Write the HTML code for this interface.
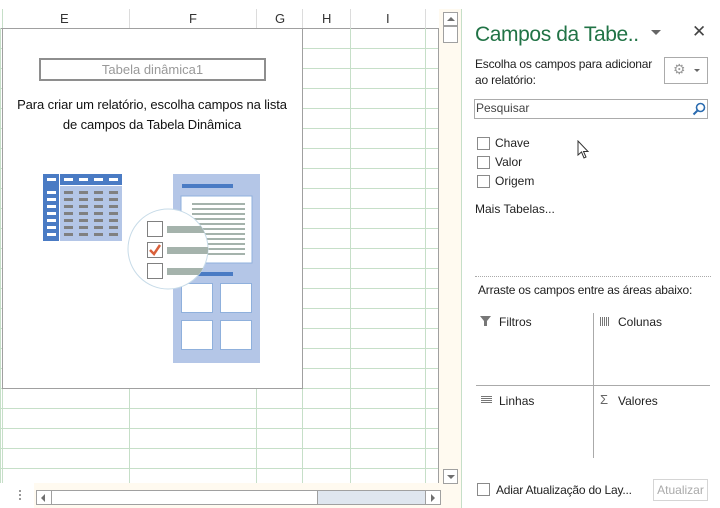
<!DOCTYPE html>
<html><head><meta charset="utf-8"><style>
*{margin:0;padding:0;box-sizing:border-box}
body{width:720px;height:508px;position:relative;overflow:hidden;background:#fff;font-family:"Liberation Sans",sans-serif;color:#222}
.a{position:absolute}
.hl{position:absolute;height:1px;background:#c6dfc8}
.vl{position:absolute;width:1px;background:#c6dfc8}
.t{position:absolute;font-size:12px;white-space:nowrap}
.cb{position:absolute;width:13px;height:13px;border:1px solid #8a8a8a;background:#fff}
</style></head><body>
<div class="a" style="left:0;top:28px;width:440px;height:1px;background:#a0a0a0"></div>
<div class="vl" style="left:2px;top:9px;height:19px"></div>
<div class="vl" style="left:129px;top:9px;height:19px;background:#dcdcdc"></div>
<div class="vl" style="left:256px;top:9px;height:19px;background:#dcdcdc"></div>
<div class="vl" style="left:302px;top:9px;height:19px;background:#dcdcdc"></div>
<div class="vl" style="left:350px;top:9px;height:19px;background:#dcdcdc"></div>
<div class="vl" style="left:425px;top:9px;height:19px;background:#dcdcdc"></div>
<div class="t" style="left:60px;top:11px;font-size:13px;color:#333">E</div>
<div class="t" style="left:189px;top:11px;font-size:13px;color:#333">F</div>
<div class="t" style="left:275px;top:11px;font-size:13px;color:#333">G</div>
<div class="t" style="left:322px;top:11px;font-size:13px;color:#333">H</div>
<div class="t" style="left:386px;top:11px;font-size:13px;color:#333">I</div>
<div id="g"></div>
<script>
var h='';
for(var y=48;y<=468;y+=20){h+='<div class="hl" style="left:0;top:'+y+'px;width:439px"></div>';}
[302,350,425].forEach(function(x){h+='<div class="vl" style="left:'+x+'px;top:28px;height:455px"></div>'});
[2,129,256].forEach(function(x){h+='<div class="vl" style="left:'+x+'px;top:388px;height:95px"></div>'});
h+='<div class="vl" style="left:0;top:28px;height:455px"></div>';
document.getElementById('g').innerHTML=h;
</script>
<div class="a" style="left:438px;top:28px;width:1px;height:455px;background:#a0a0a0"></div>
<div class="a" style="left:2px;top:28px;width:301px;height:361px;background:#fff;border:1px solid #a0a0a0"></div>
<div class="a" style="left:39px;top:58px;width:227px;height:23px;border:2px solid #8e8e8e;color:#999;font-size:13px;text-align:center;line-height:19px">Tabela dinâmica1</div>
<div class="t" style="left:0;top:95px;width:304px;text-align:center;font-size:13px;color:#111;line-height:20px;white-space:normal;letter-spacing:-0.1px">Para criar um relatório, escolha campos na lista<br>de campos da Tabela Dinâmica</div>
<svg class="a" style="left:0;top:0" width="300" height="380">
<defs><clipPath id="cc"><circle cx="168" cy="249" r="40"/></clipPath></defs>
<rect x="43" y="174" width="16" height="67" fill="#4a7bc4"/>
<rect x="60" y="174" width="62" height="11" fill="#4a7bc4"/>
<rect x="60" y="186" width="62" height="55" fill="#b4c6e7"/>
<g fill="#fff"><rect x="47" y="178" width="9" height="3"/><rect x="64" y="178" width="9" height="3"/><rect x="79" y="178" width="9" height="3"/><rect x="94" y="178" width="9" height="3"/><rect x="109" y="178" width="9" height="3"/>
<rect x="47" y="191" width="9" height="3"/><rect x="47" y="198" width="9" height="3"/><rect x="47" y="205" width="9" height="3"/><rect x="47" y="212" width="9" height="3"/><rect x="47" y="219" width="9" height="3"/><rect x="47" y="226" width="9" height="3"/><rect x="47" y="233" width="9" height="3"/></g>
<g fill="#808080" id="gr"></g>
<rect x="173" y="174" width="87" height="189" fill="#b4c6e7"/>
<rect x="182" y="184" width="51" height="4" fill="#4a7bc4"/>
<rect x="181" y="196" width="71" height="67" fill="#fff" stroke="#8fb0dc"/>
<g stroke="#a5b3ac" stroke-width="2"><line x1="192" y1="204" x2="245" y2="204"/><line x1="192" y1="209" x2="245" y2="209"/><line x1="192" y1="214" x2="245" y2="214"/><line x1="192" y1="219" x2="245" y2="219"/><line x1="192" y1="224" x2="245" y2="224"/><line x1="192" y1="229" x2="245" y2="229"/><line x1="192" y1="234" x2="245" y2="234"/><line x1="192" y1="239" x2="245" y2="239"/><line x1="192" y1="244" x2="245" y2="244"/><line x1="192" y1="249" x2="245" y2="249"/><line x1="192" y1="254" x2="245" y2="254"/></g>
<rect x="190" y="272" width="43" height="4" fill="#4a7bc4"/>
<g fill="#fff" stroke="#8fb0dc"><rect x="181.5" y="283.5" width="31" height="29"/><rect x="220.5" y="283.5" width="31" height="29"/><rect x="181.5" y="320.5" width="31" height="29"/><rect x="220.5" y="320.5" width="31" height="29"/></g>
<circle cx="168" cy="249" r="40" fill="#fff" stroke="#c7dbe8"/>
<g fill="#fff" stroke="#808080"><rect x="147.5" y="221.5" width="15" height="15"/><rect x="147.5" y="242.5" width="15" height="15"/><rect x="147.5" y="263.5" width="15" height="15"/></g>
<g fill="#a5b3ac" clip-path="url(#cc)"><rect x="167" y="226" width="40" height="7"/><rect x="167" y="247" width="42" height="7"/><rect x="167" y="268" width="40" height="7"/></g>
<path d="M150 250 L154 254 L160 245" stroke="#d9603b" stroke-width="2.5" fill="none"/>
</svg>
<script>
var s='';for(var r=0;r<7;r++)for(var c=0;c<4;c++)s+='<rect x="'+(64+c*15)+'" y="'+(191+r*7)+'" width="9" height="3"/>';
document.getElementById('gr').innerHTML=s;
</script>
<div class="a" style="left:439px;top:9px;width:22px;height:499px;background:#fffaf0"></div>
<div class="a" style="left:443px;top:12px;width:15px;height:14px;border:1px solid #a0a0a0;background:#fff"></div>
<div class="a" style="left:447px;top:17px;width:0;height:0;border-left:4px solid transparent;border-right:4px solid transparent;border-bottom:4px solid #707070"></div>
<div class="a" style="left:443px;top:26px;width:15px;height:17px;border:1px solid #a0a0a0;background:#fff"></div>
<div class="a" style="left:443px;top:469px;width:15px;height:15px;border:1px solid #a0a0a0;background:#fff"></div>
<div class="a" style="left:447px;top:475px;width:0;height:0;border-left:4px solid transparent;border-right:4px solid transparent;border-top:4px solid #707070"></div>
<div class="a" style="left:0;top:483px;width:439px;height:25px;background:#fffaf0"></div>
<div class="a" style="left:0;top:483px;width:34px;height:25px;background:#fff"></div>
<div class="a" style="left:19px;top:490px;width:2px;height:2px;background:#999;box-shadow:0 4px #999,0 8px #999"></div>
<div class="a" style="left:36px;top:490px;width:405px;height:15px;border:1px solid #a0a0a0;background:#dfe6ef"></div>
<div class="a" style="left:36px;top:490px;width:16px;height:15px;border:1px solid #a0a0a0;background:#fff"></div>
<div class="a" style="left:41px;top:494px;border-top:4px solid transparent;border-bottom:4px solid transparent;border-right:4px solid #707070"></div>
<div class="a" style="left:51px;top:490px;width:267px;height:15px;border:1px solid #a0a0a0;background:#fff"></div>
<div class="a" style="left:425px;top:490px;width:16px;height:15px;border:1px solid #a0a0a0;background:#fff"></div>
<div class="a" style="left:431px;top:494px;border-top:4px solid transparent;border-bottom:4px solid transparent;border-left:4px solid #707070"></div>
<div class="a" style="left:461px;top:9px;width:1px;height:499px;background:#c6dfc8"></div>
<div class="t" style="left:475px;top:23px;font-size:21px;letter-spacing:-0.4px;color:#217346">Campos da Tabe..</div>
<div class="a" style="left:651px;top:30px;border-left:5px solid transparent;border-right:5px solid transparent;border-top:5px solid #666"></div>
<div class="t" style="left:692px;top:22px;font-size:17px;color:#444">✕</div>
<div class="t" style="left:475px;top:56px;line-height:16px;color:#222;letter-spacing:-0.2px">Escolha os campos para adicionar<br>ao relatório:</div>
<div class="a" style="left:664px;top:57px;width:44px;height:27px;border:1px solid #ababab"></div>
<div class="t" style="left:673px;top:61px;font-size:14px;color:#999">⚙</div>
<div class="a" style="left:694px;top:69px;border-left:3px solid transparent;border-right:3px solid transparent;border-top:3px solid #666"></div>
<div class="a" style="left:474px;top:99px;width:234px;height:20px;border:1px solid #ababab"></div>
<div class="t" style="left:476px;top:101px;color:#444">Pesquisar</div>
<svg class="a" style="left:692px;top:102px" width="14" height="14"><circle cx="8.5" cy="5.5" r="4" fill="none" stroke="#2b6cb0" stroke-width="1.6"/><line x1="5.5" y1="8.5" x2="1.5" y2="12.5" stroke="#2b6cb0" stroke-width="2"/></svg>
<div class="cb" style="left:477px;top:137px"></div><div class="t" style="left:495px;top:136px">Chave</div>
<div class="cb" style="left:477px;top:156px"></div><div class="t" style="left:495px;top:155px">Valor</div>
<div class="cb" style="left:477px;top:175px"></div><div class="t" style="left:495px;top:174px">Origem</div>
<svg class="a" style="left:577px;top:140px" width="14" height="20"><path d="M1 1 L1 15 L4.5 12 L7 18 L9 17 L6.5 11.5 L11 11.5 Z" fill="#fff" stroke="#333"/></svg>
<div class="t" style="left:475px;top:202px">Mais Tabelas...</div>
<div class="a" style="left:475px;top:276px;width:236px;border-top:1px dotted #aaa"></div>
<div class="t" style="left:478px;top:283px;letter-spacing:-0.2px">Arraste os campos entre as áreas abaixo:</div>
<div class="a" style="left:593px;top:313px;width:1px;height:145px;background:#aaa"></div>
<div class="a" style="left:476px;top:385px;width:234px;height:1px;background:#aaa"></div>
<svg class="a" style="left:480px;top:316px" width="12" height="10"><path d="M0 0 H11 L7 5 V10 H4 V5 Z" fill="#777"/></svg>
<div class="t" style="left:499px;top:315px">Filtros</div>
<svg class="a" style="left:600px;top:317px" width="10" height="9"><g fill="#777"><rect x="0" width="1" height="9"/><rect x="2" width="1" height="9"/><rect x="4" width="1" height="9"/><rect x="6" width="1" height="9"/><rect x="8" width="1" height="9"/></g></svg>
<div class="t" style="left:618px;top:315px">Colunas</div>
<svg class="a" style="left:481px;top:396px" width="11" height="9"><g fill="#777"><rect y="0" width="11" height="1"/><rect y="2" width="11" height="1"/><rect y="4" width="11" height="1"/><rect y="6" width="11" height="1"/></g></svg>
<div class="t" style="left:499px;top:394px">Linhas</div>
<div class="t" style="left:600px;top:392px;color:#666;font-size:13px">Σ</div>
<div class="t" style="left:618px;top:394px">Valores</div>
<div class="cb" style="left:477px;top:483px"></div>
<div class="t" style="left:496px;top:483px;letter-spacing:-0.2px">Adiar Atualização do Lay...</div>
<div class="a" style="left:653px;top:479px;width:55px;height:22px;border:1px solid #d5d5d5;color:#aaa;font-size:12px;text-align:center;line-height:20px">Atualizar</div>
</body></html>
